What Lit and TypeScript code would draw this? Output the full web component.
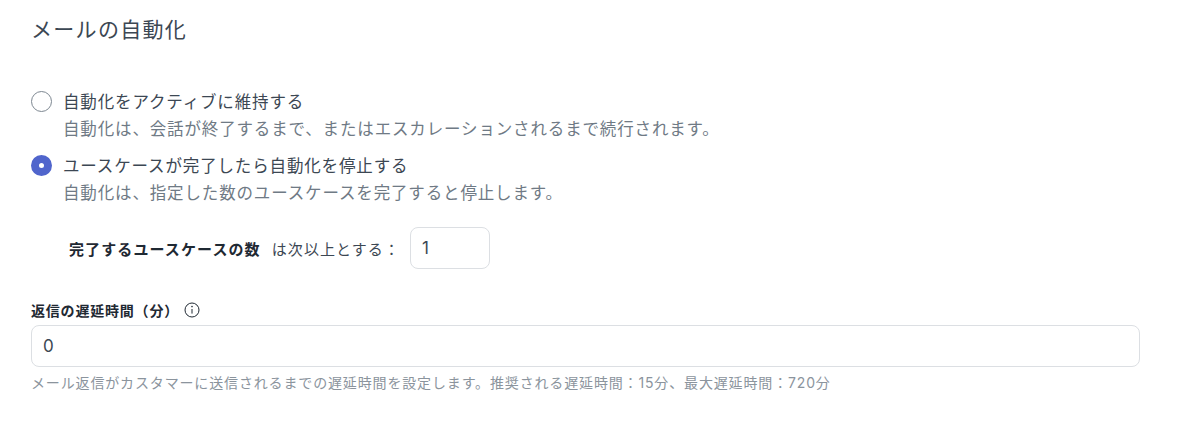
import { LitElement, html, css } from "lit";
import { customElement } from "lit/decorators.js";

@customElement("app-root")
export class AppRoot extends LitElement {
  static styles = css`
    :host {
      display: block;
      width: 1200px;
      height: 422px;
      box-sizing: border-box;
      padding: 15px 60px 0 31px;
      background: #fff;
      font-family: "Inter", "Noto Sans CJK JP", sans-serif;
      overflow: hidden;
    }
    h2 {
      margin: 0;
      font-size: 21px;
      line-height: 30px;
      font-weight: 400;
      letter-spacing: 1.3px;
      color: #3c4753;
    }
    .radios {
      display: flex;
      flex-direction: column;
      gap: 13px;
      margin-top: 45px;
    }
    .radio {
      display: grid;
      grid-template-columns: 21px 1fr;
      column-gap: 12px;
    }
    .dot {
      width: 21px;
      height: 21px;
      box-sizing: border-box;
      border-radius: 50%;
      border: 1px solid #7d8791;
      margin-top: 1px;
    }
    .dot.on {
      border: 8px solid #5065cc;
      background: #fff;
    }
    .t {
      font-size: 16.5px;
      line-height: 24px;
      letter-spacing: 0.85px;
      color: #3c4753;
      margin-left: -1px;
    }
    .d {
      grid-column: 2;
      font-size: 16.5px;
      line-height: 24px;
      letter-spacing: 0.85px;
      color: #6f7a85;
      margin: 3px 0 0 -1px;
    }
    .count {
      display: flex;
      align-items: center;
      margin: 22px 0 0 38px;
      font-size: 15px;
      letter-spacing: 1.1px;
      color: #3c4753;
    }
    .count b {
      font-weight: 700;
      color: #1f2933;
      margin-right: 11px;
    }
    .input {
      box-sizing: border-box;
      height: 42px;
      border: 1px solid #dcdfe3;
      border-radius: 8px;
      display: flex;
      align-items: center;
      padding-left: 11px;
      font-size: 17px;
      letter-spacing: 0;
      color: #3c4753;
    }
    .count .input {
      width: 80px;
      margin-left: 10px;
    }
    .label {
      display: flex;
      align-items: center;
      gap: 5px;
      margin: 27px 0 1px;
      height: 28px;
      font-size: 14px;
      font-weight: 700;
      letter-spacing: 0.8px;
      color: #1f2933;
    }
    .label svg {
      display: block;
    }
    .wide {
      width: 1109px;
    }
    .hint {
      margin-top: 5px;
      font-size: 14px;
      line-height: 21px;
      letter-spacing: 0.85px;
      color: #8b949d;
    }
  `;

  render() {
    return html`
      <h2>メールの自動化</h2>
      <div class="radios">
        <div class="radio">
          <span class="dot"></span>
          <div class="t">自動化をアクティブに維持する</div>
          <div class="d">自動化は、会話が終了するまで、またはエスカレーションされるまで続行されます。</div>
        </div>
        <div class="radio">
          <span class="dot on"></span>
          <div class="t">ユースケースが完了したら自動化を停止する</div>
          <div class="d">自動化は、指定した数のユースケースを完了すると停止します。</div>
        </div>
      </div>
      <div class="count">
        <b>完了するユースケースの数</b>
        <span>は次以上とする：</span>
        <div class="input">1</div>
      </div>
      <div class="label">
        <span>返信の遅延時間（分）</span>
        <svg width="16" height="16" viewBox="0 0 16 16" fill="none" stroke="#1f2933" stroke-width="1">
          <circle cx="8" cy="8" r="7"></circle>
          <path d="M8 7v4.6"></path>
          <circle cx="8" cy="4.6" r="0.8" fill="#1f2933" stroke="none"></circle>
        </svg>
      </div>
      <div class="input wide">0</div>
      <div class="hint">メール返信がカスタマーに送信されるまでの遅延時間を設定します。推奨される遅延時間：15分、最大遅延時間：720分</div>
    `;
  }
}
